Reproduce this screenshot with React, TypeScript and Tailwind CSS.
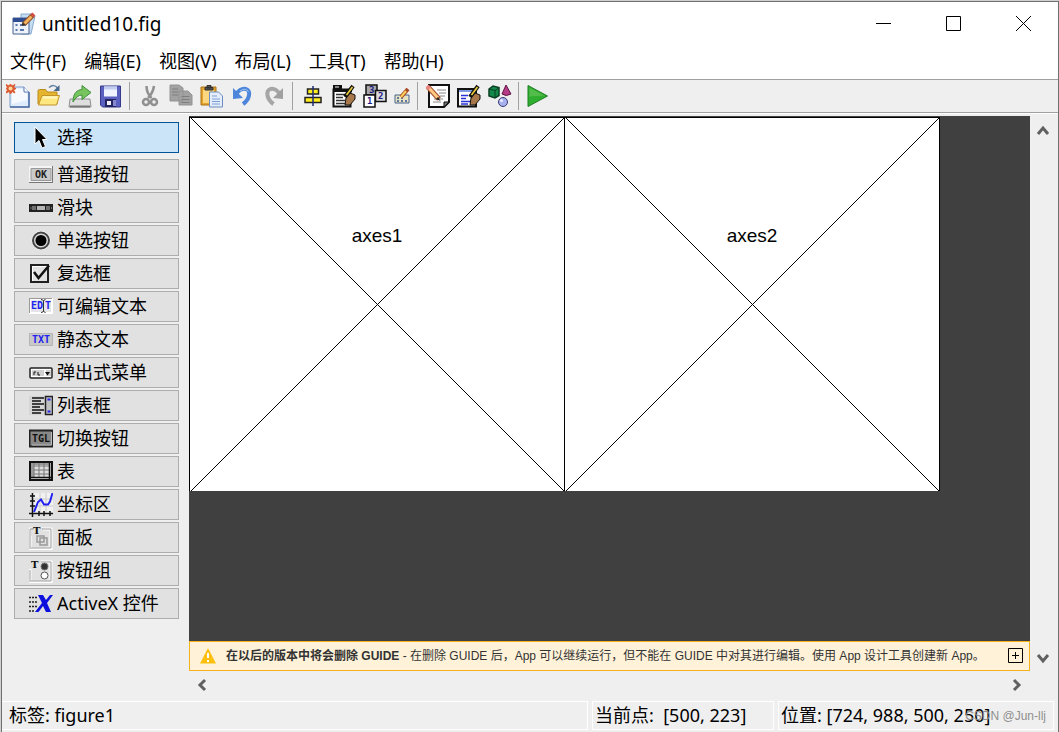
import { useState, type ReactNode } from 'react';

const MONO = 'DejaVu Sans Mono';

type IconProps = { children: ReactNode; small?: boolean };

function Icon({ children, small }: IconProps) {
    return (
        <svg className={small ? 'w-4 h-4 shrink-0' : 'w-6 h-6 shrink-0'} viewBox={small ? '0 0 16 16' : '0 0 24 24'} fill="none" aria-hidden="true">
            {children}
        </svg>
    );
}

/* Toolbar icons */

const newIcon = (
    <Icon>
        <path d="M4 3h14l5 5v15H4z" fill="#dfecfb" stroke="#7d9cc9" />
        <path d="M6 5h10l5 5v6L6 20z" fill="#f6faff" />
        <path d="M4 23h19V8" stroke="#4d6ca5" strokeWidth="1.500" />
        <path d="M18 3v5h5" fill="#fff" stroke="#5c7bb0" />
        <path d="M0 .5 3 2 4.500 0 6 2 9 .5 7.500 3.500 10 4.500 7.500 6 9 9 6 7.500 4.500 10 3 7.500 0 9l1.500-3L0 4.500l1.500-1z" fill="#dc5a32" stroke="#dc5a32" />
        <circle cx="4.500" cy="4.500" r="2" fill="#ffd59a" />
    </Icon>
);

const openIcon = (
    <Icon>
        <path d="M1 7q0-1.500 1.500-1.500h6L10.500 8H20v12H1z" fill="#e5b52f" stroke="#b98a1c" />
        <path d="M1.500 21 5 11.500h17.500L19.500 21z" fill="#ffe77f" stroke="#c2942a" />
        <path d="M6 13.500h14" stroke="#fff6c2" strokeWidth="2" />
        <path d="M12 3.500q5-4 8.500.500" stroke="#5e7f9f" strokeWidth="1.500" />
        <path d="M22.500 1v6h-6z" fill="#47698c" />
    </Icon>
);

const exportIcon = (
    <Icon>
        <path d="M2 15h20l1 8H1z" fill="#dedede" stroke="#8e8e8e" />
        <path d="M2 22.500h20" stroke="#777" strokeWidth="2" />
        <path d="M5 18C5 9 9 6 14 5.500V1.500l9 7-9 7v-4.500q-5 0-9 7z" fill="#77c35e" stroke="#3f8f3a" />
    </Icon>
);

const saveIcon = (
    <Icon>
        <path d="M1.500 2h20v21H3.500l-2-2z" fill="#5a60c0" stroke="#35388c" />
        <path d="M5 2.500h13v10H5z" fill="#eef3fd" />
        <path d="M5 2.500h13v3H5z" fill="#c0ccf0" />
        <path d="M6 15h11v8H6z" fill="#23245f" />
        <path d="M8 17h4v4H8z" fill="#f2f2ff" />
        <path d="M14 16h3v6h-3z" fill="#8588d0" />
    </Icon>
);

const cutIcon = (
    <Icon>
        <path d="M8.500 2q0 7 5 12M16 2q-1 7-6 12" stroke="#909090" strokeWidth="2.500" />
        <circle cx="8" cy="18" r="3" stroke="#909090" strokeWidth="2.500" />
        <circle cx="16" cy="18" r="3" stroke="#909090" strokeWidth="2.500" />
    </Icon>
);

const copyIcon = (
    <Icon>
        <path d="M1 1h9l4 3v13H1zM10 7h9l4 4v10H10z" fill="#a2a2a2" stroke="#939393" />
        <path d="M3 5h6M3 8h6M3 11h6M12.500 12.500h8M12.500 15.500h8M12.500 18.500h8" stroke="#7f7f7f" />
    </Icon>
);

const pasteIcon = (
    <Icon>
        <path d="M1 3h15v18H1z" fill="#e5a42b" stroke="#a9731b" />
        <path d="M3 6h11v13H3z" fill="#fbd781" />
        <path d="M5 3.500h8V6H5zM7 1.500h4V4H7z" fill="#555" stroke="#333" />
        <path d="M9.500 8h9l4 4v11h-13z" fill="#e4eefb" stroke="#6d8cc1" />
        <path d="M12 12h5M12 15h8M12 17.500h8M12 20h8" stroke="#7f9fd4" />
    </Icon>
);

const undoIcon = (
    <Icon>
        <path d="M5 10Q10 3.500 15 5q4 1.500 3 6.500-1 5-6 8.500" stroke="#4d86da" strokeWidth="4" />
        <path d="M2 4v11l10-1z" fill="#4d86da" />
        <path d="M9 7q6-4 8.500 1" stroke="#9fc3f3" />
    </Icon>
);

const redoIcon = (
    <Icon>
        <path d="M18 10Q13 3.500 8.500 5q-4 1.500-3 6.500 1 5 6 8.500" stroke="#a6a6a6" strokeWidth="4" />
        <path d="M21 4v11l-10-1z" fill="#a0a0a0" />
    </Icon>
);

const alignIcon = (
    <Icon>
        <path d="M6.500 5h11v5h-11zM4 13.500h16v5H4z" fill="#ffee1f" stroke="#222" strokeWidth="1.500" />
        <path d="M12 2v20" stroke="#1e2a7a" strokeWidth="1.500" />
    </Icon>
);

const hand = (
    <>
        <path d="m14 14 4-5 5 2v4l-5 6h-5z" fill="#a9784a" stroke="#111" />
        <path d="m13 13 8-11" stroke="#111" strokeWidth="4" />
        <path d="m14.500 11 6-8" stroke="#f1d43b" strokeWidth="1.500" />
    </>
);

const menuEditorIcon = (
    <Icon>
        <path d="M1.500 5.500h17v17h-17z" fill="#fff" stroke="#111" strokeWidth="2" />
        <path d="M1 1h9v4h10v3H1z" fill="#111" />
        <path d="M3 3h4" stroke="#fff" />
        <path d="M4 10.500h9M4 13.500h7M4 16.500h9M4 19.500h10" stroke="#333" strokeWidth="1.500" />
        {hand}
    </Icon>
);

const tabOrderIcon = (
    <Icon>
        <path d="M3 1h11v10H3z" fill="#a9a9a9" stroke="#111" strokeWidth="1.500" />
        <path d="M12.500 6.500h10.500v11H12.500z" fill="#dcdcdc" stroke="#111" strokeWidth="1.500" />
        <path d="M1 11h11v12H1z" fill="#fff" stroke="#111" strokeWidth="1.500" />
        <g fontFamily={MONO} fontSize="9" fontWeight="bold" fill="#1c1c84">
            <text x="6" y="9">3</text>
            <text x="15" y="15">2</text>
            <text x="4" y="20">1</text>
        </g>
    </Icon>
);

const toolbarEditorIcon = (
    <Icon small>
        <path d="M1 7h14v8H1z" fill="#e6e2c4" stroke="#46658e" />
        <path d="M3 10h2M7 10h2M3 13h2M7 13h2M11 13h2" stroke="#39568a" strokeWidth="1.500" />
        <path d="m7 9 7-8" stroke="#a94924" strokeWidth="4" />
        <path d="m7 9 5-6" stroke="#ffd05a" strokeWidth="2" />
    </Icon>
);

const mFileIcon = (
    <Icon>
        <path d="M3 1h20v17l-5 5H3z" fill="#fff" stroke="#111" strokeWidth="2" />
        <path d="M23 18h-5v5z" fill="#777" stroke="#111" />
        <path d="M11 6h9M13 9h7M14 12h5M8 15h9M7 18h8" stroke="#888" />
        <path d="m2 3 11 12" stroke="#a04b2a" strokeWidth="5" />
        <path d="m3 4 9 10" stroke="#ffca82" strokeWidth="3" />
        <path d="m1 2 2.500 3" stroke="#e98480" strokeWidth="4" />
        <path d="m12 13 2.500 4-4.500-2z" fill="#222" />
    </Icon>
);

const inspectorIcon = (
    <Icon>
        <path d="M1 5h18v17.500H1z" fill="#fff" stroke="#111" strokeWidth="2" />
        <path d="M2 6h16v2H2z" fill="#7e9ae0" />
        <path d="M4 11.500h7M4 14.500h5M4 17.500h10M4 20h7" stroke="#2933d6" strokeWidth="1.500" />
        {hand}
    </Icon>
);

const browserIcon = (
    <Icon>
        <path d="m1 5 4-3 6 1.500v8L7 14l-6-2z" fill="#138a49" stroke="#0c3f24" strokeWidth="1.500" />
        <path d="m1 5 6 1.500L11 4M7 6.500V14" stroke="#0c3f24" />
        <path d="m18 1 5 9q-5 3-9 0z" fill="#b63a86" stroke="#5c1742" />
        <circle cx="15" cy="18" r="4.500" fill="#a9b0ee" stroke="#373c73" />
        <circle cx="13.500" cy="16.500" r="1.500" fill="#eef" />
    </Icon>
);

const runIcon = (
    <Icon>
        <path d="M1 1.500v21L20.500 12z" fill="#2fae2f" stroke="#1f7f22" />
        <path d="M2.500 4v8.500l15-1z" fill="#52bd4b" />
    </Icon>
);

const toolbarGroups = [
    [
        { label: '新建图窗', icon: newIcon },
        { label: '打开图窗', icon: openIcon },
        { label: '导出', icon: exportIcon },
        { label: '保存图窗', icon: saveIcon },
    ],
    [
        { label: '剪切', icon: cutIcon },
        { label: '复制', icon: copyIcon },
        { label: '粘贴', icon: pasteIcon },
        { label: '撤消', icon: undoIcon },
        { label: '重做', icon: redoIcon },
    ],
    [
        { label: '对齐对象', icon: alignIcon },
        { label: '菜单编辑器', icon: menuEditorIcon },
        { label: 'Tab 键顺序编辑器', icon: tabOrderIcon },
        { label: '工具栏编辑器', icon: toolbarEditorIcon, small: true },
    ],
    [
        { label: '编辑器', icon: mFileIcon },
        { label: '属性检查器', icon: inspectorIcon },
        { label: '对象浏览器', icon: browserIcon },
    ],
    [{ label: '运行图窗', icon: runIcon }],
];

/* Component palette */

const palette = [
    {
        label: '选择',
        icon: (
            <Icon>
                <path d="M6 1v17l4-3.500 3 7.500 3.500-1.500-3-7H18z" fill="#000" stroke="#fff" />
            </Icon>
        ),
    },
    {
        label: '普通按钮',
        icon: (
            <Icon>
                <path d="M0 3h24v17H0z" fill="#777" />
                <path d="M0 3h23v16H0z" fill="#f4f4f4" />
                <path d="M2 5.500h20v12H2z" fill="#c9c9c9" stroke="#999" />
                <text x="6" y="15" fontFamily={MONO} fontSize="10" fontWeight="bold" fill="#222">OK</text>
            </Icon>
        ),
    },
    {
        label: '滑块',
        icon: (
            <Icon>
                <path d="M0 8h24v8H0z" fill="#222" />
                <path d="M8 10h8v4H8z" fill="#b5b5b5" />
                <path d="M1.500 12h1M4 10v4M6 10v4M18 10v4M20 10v4M22 12h1" stroke="#bbb" />
            </Icon>
        ),
    },
    {
        label: '单选按钮',
        icon: (
            <Icon>
                <circle cx="12" cy="11.500" r="9" fill="#ddd" stroke="#fff" />
                <circle cx="12" cy="11.500" r="8" fill="#d6d6d6" stroke="#444" strokeWidth="2" />
                <circle cx="12" cy="11.500" r="5.500" fill="#000" />
            </Icon>
        ),
    },
    {
        label: '复选框',
        icon: (
            <Icon>
                <path d="M2 3h17v17H2z" fill="#e3e3e3" stroke="#222" strokeWidth="2" />
                <path d="M3.500 19V4.500H18" stroke="#fff" />
                <path d="m5 10 4.500 6L20 3.500" stroke="#111" strokeWidth="2.500" />
            </Icon>
        ),
    },
    {
        label: '可编辑文本',
        icon: (
            <Icon>
                <path d="M0 3h24v16H0z" fill="#fff" />
                <path d="M0 3h23v1H1v14H0z" fill="#999" />
                <path d="M2 5h20v12H2z" fill="#e4e4e9" />
                <g fontFamily={MONO} fontSize="10" fontWeight="bold" fill="#2222f0">
                    <text x="2" y="14">ED</text>
                    <text x="16" y="14">T</text>
                </g>
                <path d="M12 4.500q2 0 2.500 1.500.500-1.500 2-1.500M14.500 6v10M12 17.500q2 0 2.500-1.500.500 1.500 2 1.500" stroke="#333" />
            </Icon>
        ),
    },
    {
        label: '静态文本',
        icon: (
            <Icon>
                <path d="M.5 5.500h23v12H.5z" fill="#c8c8c8" stroke="#b5b5b5" />
                <text x="3" y="15" fontFamily={MONO} fontSize="10" fontWeight="bold" fill="#2222f0">TXT</text>
            </Icon>
        ),
    },
    {
        label: '弹出式菜单',
        icon: (
            <Icon>
                <rect x="1" y="7" width="22" height="10" rx="1" fill="#fff" stroke="#222" strokeWidth="1.500" />
                <path d="M3 9h12v6H3zM17 9h5v6h-5z" fill="#d0d0d0" />
                <path d="M5 14v-3h2M9 11v3h2" stroke="#111" />
                <path d="M16 11h5l-2.500 3.500z" fill="#111" />
            </Icon>
        ),
    },
    {
        label: '列表框',
        icon: (
            <Icon>
                <path d="M0 2h24v19H0z" fill="#d5d5d5" />
                <path d="M3 4h12M3 7h9M3 10h12M3 13h8M3 16h12M3 19h9" stroke="#111" strokeWidth="1.500" />
                <path d="M16.500 2.500h7v18h-7z" fill="#c0c0c0" stroke="#222" strokeWidth="1.500" />
                <path d="M18.500 5.500h3M18.500 17.500h3" stroke="#2222f0" strokeWidth="2" />
            </Icon>
        ),
    },
    {
        label: '切换按钮',
        icon: (
            <Icon>
                <path d="M.5 3.500h23v16H.5z" fill="#888" stroke="#222" strokeWidth="2" />
                <path d="M22.500 5v13H3" stroke="#bbb" />
                <text x="3" y="15" fontFamily={MONO} fontSize="10" fontWeight="bold" fill="#111">TGL</text>
            </Icon>
        ),
    },
    {
        label: '表',
        icon: (
            <Icon>
                <path d="M1 2h22v18H1z" fill="#ddd" stroke="#111" strokeWidth="2" />
                <path d="M2 3h3v14H2zM5 3h15v2H5z" fill="#999" />
                <path d="M5 3v14M10 3v14M15 3v14M5 6h15M5 10h15M5 14h15" stroke="#777" />
                <path d="M20.500 2v18M2 17.500h20" stroke="#111" strokeWidth="1.500" />
            </Icon>
        ),
    },
    {
        label: '坐标区',
        icon: (
            <Icon>
                <path d="M4 0h20v20H4z" fill="#f1f1f1" />
                <path d="M11 0v20M17 0v20M4 6h20M4 13h20" stroke="#ccc" />
                <path d="M3.500 0v24M0 20.500h24" stroke="#111" strokeWidth="1.500" />
                <path d="M1 3h5M1 8h5M1 13h5M10 18v5M15 18v5M21 18v5" stroke="#111" strokeWidth="1.500" />
                <path d="m5 19 4-10 3-2.500 3 5h4l2-3 2.500-8.500" stroke="#2222f0" strokeWidth="2" />
            </Icon>
        ),
    },
    {
        label: '面板',
        icon: (
            <Icon>
                <path d="M1 3h21v20H1z" stroke="#fff" strokeWidth="3" />
                <path d="M2 2h12v8H2z" fill="#e1e1e1" />
                <path d="M1 23V3h3M13 3h9v19H2" stroke="#999" />
                <path d="M8 10h7v6H8zM11 12h7v7h-7z" stroke="#999" strokeWidth="1.500" />
                <text x="4" y="8" fontFamily="DejaVu Serif" fontSize="10" fontWeight="bold" fill="#111">T</text>
            </Icon>
        ),
    },
    {
        label: '按钮组',
        icon: (
            <Icon>
                <path d="M1 3h21v20H1z" stroke="#fff" strokeWidth="3" />
                <path d="M0 1h12v9H0z" fill="#e1e1e1" />
                <path d="M1 23V11M12 3h10v19H2" stroke="#999" />
                <text x="2" y="9" fontFamily="DejaVu Serif" fontSize="10" fontWeight="bold" fill="#111">T</text>
                <circle cx="15.500" cy="7.500" r="3.500" fill="#333" stroke="#777" />
                <circle cx="15.500" cy="16.500" r="3.500" fill="#fff" stroke="#555" />
            </Icon>
        ),
    },
    {
        label: 'ActiveX 控件',
        icon: (
            <Icon>
                <path d="M0 5.500h8M0 10h8M0 14.500h8M0 19h6" stroke="#222" strokeWidth="1.500" strokeDasharray="2 1" />
                <path d="M9 3h5l3 5 4-5h3l-6 8 4 9h-5l-3-6-4.500 6H6l7-9z" fill="#0d10dd" />
            </Icon>
        ),
    },
];

const menus = ['文件(F)', '编辑(E)', '视图(V)', '布局(L)', '工具(T)', '帮助(H)'];

function Axes({ name }: { name: string }) {
    return (
        <div className="relative w-[375px] h-[374px] bg-white border-t border-l border-black">
            <svg className="block w-full h-full" viewBox="0 0 374 373" shapeRendering="crispEdges" aria-hidden="true">
                <path d="m1 0 373 373M374 0 1 373" stroke="#000" fill="none" />
            </svg>
            <span className="absolute inset-x-0 top-[106px] text-center font-['Liberation_Sans',sans-serif] text-[19px] leading-6">{name}</span>
        </div>
    );
}

function Chevron({ d, label }: { d: string; label: string }) {
    return (
        <button type="button" aria-label={label} className="flex items-center justify-center w-[26px] h-7">
            <svg className="w-4 h-4" viewBox="0 0 16 16" fill="none" aria-hidden="true">
                <path d={d} stroke="#606060" strokeWidth="3" />
            </svg>
        </button>
    );
}

export default function App() {
    const [selected, setSelected] = useState('选择');

    return (
        <div className="h-screen pt-px pl-px bg-[#d0d0d0] text-black font-['Noto_Sans','Noto_Sans_CJK_SC',sans-serif] text-[18px] leading-6">
            <div className="relative flex flex-col h-full bg-[#efefef] border-t border-x border-[#707070]">
                {/* Title bar */}
                <header className="flex items-center h-[43px] pl-2.5 bg-white">
                    <svg className="w-6 h-6" viewBox="0 0 24 24" fill="none" aria-hidden="true">
                        <path d="M9 2h12l2 2-4 18H9z" fill="#c4ddf3" stroke="#88abd0" />
                        <path d="M1 6h16v16H1z" fill="#eef3fb" stroke="#47618f" />
                        <path d="M1 6h16v4H1z" fill="#2d4d90" />
                        <path d="M3.500 13h2M3.500 18h2M8 13h6M8 18h4" stroke="#5878af" strokeWidth="2" />
                        <path d="m12 12 9-9" stroke="#8b4c27" strokeWidth="5" />
                        <path d="m12.500 11.500 7-7" stroke="#f4b35d" strokeWidth="3" />
                        <path d="m20 4 2-2" stroke="#d45144" strokeWidth="4" />
                        <path d="m9.500 14 1-4 3 3z" fill="#3e3024" />
                    </svg>
                    <h1 className="ml-1.5 text-[19px]">untitled10.fig</h1>
                    <div className="flex ml-auto">
                        <button type="button" aria-label="最小化" className="flex items-center justify-center w-[70px] h-[43px]">
                            <svg className="w-[15px] h-[15px]" viewBox="0 0 15 15" aria-hidden="true">
                                <path d="M0 7.500h15" stroke="#000" />
                            </svg>
                        </button>
                        <button type="button" aria-label="最大化" className="flex items-center justify-center w-[70px] h-[43px]">
                            <svg className="w-[15px] h-[15px]" viewBox="0 0 15 15" fill="none" aria-hidden="true">
                                <path d="M.5.5h14v14H.5z" stroke="#000" />
                            </svg>
                        </button>
                        <button type="button" aria-label="关闭" className="flex items-center justify-center w-[70px] h-[43px]">
                            <svg className="w-[15px] h-[15px]" viewBox="0 0 15 15" aria-hidden="true">
                                <path d="m0 0 15 15M15 0 0 15" stroke="#000" />
                            </svg>
                        </button>
                    </div>
                </header>

                {/* Menu bar */}
                <nav className="flex items-center gap-[18px] h-[34px] pl-2 pb-0.5 bg-white">
                    {menus.map((menu) => (
                        <button key={menu} type="button">{menu}</button>
                    ))}
                </nav>

                {/* Toolbar */}
                <div role="toolbar" className="flex items-center h-[34px] border-y border-[#a0a0a0]">
                    {toolbarGroups.map((group, i) => (
                        <div key={i} className="flex items-center">
                            {i > 0 && <span className="w-px h-7 ml-[3px] mr-1 bg-[#a0a0a0]" />}
                            {group.map((item) => (
                                <button
                                    key={item.label}
                                    type="button"
                                    aria-label={item.label}
                                    className={`flex items-center justify-center h-7 ${'small' in item ? 'w-6' : 'w-[31px]'}`}
                                >
                                    {item.icon}
                                </button>
                            ))}
                        </div>
                    ))}
                </div>

                <div className="flex flex-1 min-h-0 border-t border-white">
                    {/* Palette */}
                    <aside className="flex flex-col gap-0.5 w-[187px] shrink-0 pl-3 pr-2.5 pt-2">
                        {palette.map(({ label, icon }) => (
                            <button
                                key={label}
                                type="button"
                                aria-pressed={selected === label}
                                onClick={() => setSelected(label)}
                                className={`flex items-center gap-1 h-[31px] shrink-0 pl-3.5 border first:mb-1 ${selected === label ? 'bg-[#cce4f7] border-[#005499]' : 'bg-[#e1e1e1] border-[#adadad]'}`}
                            >
                                {icon}
                                <span className="pb-0.5">{label}</span>
                            </button>
                        ))}
                    </aside>

                    {/* Layout area */}
                    <main className="flex flex-col flex-1 min-w-0 pt-0.5">
                        <div className="flex-1 min-h-0 overflow-hidden bg-[#404040] pt-px">
                            <div className="flex w-[751px] border-r border-black">
                                <Axes name="axes1" />
                                <Axes name="axes2" />
                            </div>
                        </div>
                        <div className="flex items-center h-[30px] pl-2.5 pr-1.5 bg-[#fff2d9] border border-[#f5b21a] text-[#333]">
                            <svg className="w-4 h-4 shrink-0" viewBox="0 0 16 16" aria-hidden="true">
                                <path d="M8 0 16 15.500H0z" fill="#fdc010" />
                                <path d="M7 5h2v5H7zM7 12h2v2H7z" fill="#fff" />
                            </svg>
                            <p className="ml-2.5 whitespace-nowrap font-['Liberation_Sans','Noto_Sans_CJK_SC',sans-serif] text-[12px] leading-4">
                                <strong>在以后的版本中将会删除 GUIDE</strong> - 在删除 GUIDE 后，App 可以继续运行，但不能在 GUIDE 中对其进行编辑。使用 App 设计工具创建新 App。
                            </p>
                            <button type="button" aria-label="展开" className="ml-auto pb-0.5">
                                <svg className="block w-[15px] h-[15px]" viewBox="0 0 15 15" fill="none" aria-hidden="true">
                                    <path d="M.5.5h14v14H.5zM4 7.500h7M7.500 4v7" stroke="#000" />
                                </svg>
                            </button>
                        </div>
                        <div className="flex justify-between h-7">
                            <Chevron label="向左滚动" d="m11 3-5 5 5 5" />
                            <Chevron label="向右滚动" d="m5 3 5 5-5 5" />
                        </div>
                    </main>

                    <div className="flex flex-col justify-between w-7 shrink-0 pt-0.5 pb-7">
                        <Chevron label="向上滚动" d="m3 12 5-6 5 6" />
                        <Chevron label="向下滚动" d="m3 6 5 6 5-6" />
                    </div>
                </div>

                {/* Status bar */}
                <footer className="flex gap-1 h-[33px] pt-0.5 pb-0.5 pr-1">
                    <div className="flex-1 pl-[7px] border-y border-r border-white leading-[26px]">标签: figure1</div>
                    <div className="w-[182px] pl-0.5 border border-white leading-[26px] whitespace-pre">当前点:  [500, 223]</div>
                    <div className="w-[276px] pl-0.5 border border-white leading-[26px]">位置: [724, 988, 500, 250]</div>
                </footer>
                <span className="absolute right-3 bottom-2 font-['Liberation_Sans',sans-serif] text-[12px] leading-4 text-[#909090]">CSDN @Jun-llj</span>
            </div>
        </div>
    );
}
